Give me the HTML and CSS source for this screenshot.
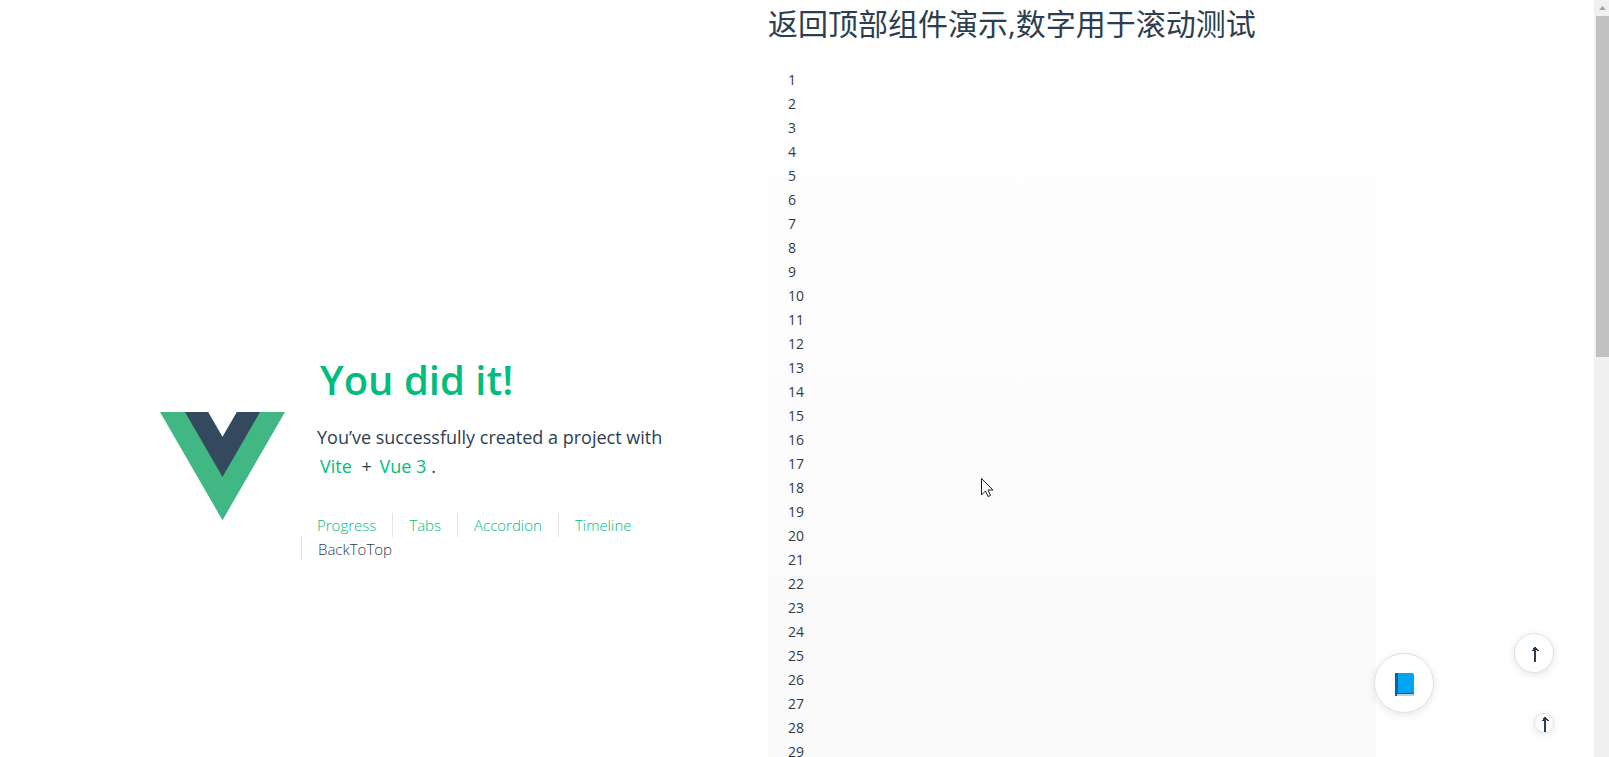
FILE: index.html
```html
<!DOCTYPE html>
<html lang="zh-CN">
<head>
<meta charset="utf-8">
<title>BackToTop</title>
<link rel="stylesheet" href="styles.css">
</head>
<body>
<div class="window">
  <div class="page">
    <header class="intro">
      <svg class="logo" viewBox="0 0 261.76 226.69" role="img" aria-label="Vue logo">
        <path fill="#41b883" d="M161.096.001l-30.225 52.351L100.647.001H-.005l130.877 226.688L261.749.001z"/>
        <path fill="#34495e" d="M161.096.001l-30.225 52.351L100.647.001H52.346l78.526 136.01L209.398.001z"/>
      </svg>
      <div class="wrapper">
        <div class="greetings">
          <h1 class="greeting-title">You did it!</h1>
          <h3 class="greeting-text">You’ve successfully created a project with<br><a class="link" href="#vite">Vite</a> + <a class="link" href="#vue">Vue 3</a>.</h3>
        </div>
        <nav class="nav">
          <a class="nav-link" href="#progress">Progress</a>
          <a class="nav-link" href="#tabs">Tabs</a>
          <a class="nav-link" href="#accordion">Accordion</a>
          <a class="nav-link" href="#timeline">Timeline</a>
          <a class="nav-link nav-current" href="#backtotop">BackToTop</a>
        </nav>
      </div>
    </header>
    <main class="demo">
      <h2 class="demo-title">返回顶部组件演示,数字用于滚动测试</h2>
      <ul class="numbers">
        <li>1</li><li>2</li><li>3</li><li>4</li><li>5</li><li>6</li><li>7</li><li>8</li><li>9</li><li>10</li>
        <li>11</li><li>12</li><li>13</li><li>14</li><li>15</li><li>16</li><li>17</li><li>18</li><li>19</li><li>20</li>
        <li>21</li><li>22</li><li>23</li><li>24</li><li>25</li><li>26</li><li>27</li><li>28</li><li>29</li>
      </ul>
    </main>
  </div>
  <div class="scrollbar" aria-hidden="true">
    <svg class="scroll-arrow" viewBox="0 0 13 16"><path fill="#a3a3a3" d="M3 10h7L6.500 6z"/></svg>
    <div class="scroll-thumb"></div>
  </div>
</div>
<button class="top-button top-book" type="button" aria-label="Back to top, book">
  <svg class="book" viewBox="0 0 19 23"><path fill="#0063b1" d="M0 0h3v23H0z"/><path fill="#cccccc" d="M2 21h17v2H2z"/><path fill="#0063b1" d="M0 20h19v1H2v2H0z"/><path fill="#00a4ef" d="M3 0h15v1h1v19H3z"/></svg>
</button>
<button class="top-button top-medium" type="button" aria-label="Back to top">
  <svg class="arrow" viewBox="0 0 7 15"><path fill="#2c3e50" d="M2 0h2v1h1v1h1v1h1v1H5V3H4v12H2V3v1H0V3h1V1h1z"/></svg>
</button>
<button class="top-button top-small" type="button" aria-label="Back to top, small">
  <svg class="arrow" viewBox="0 0 7 15"><path fill="#2c3e50" d="M2 0h2v1h1v1h1v1h1v1H5V3H4v12H2V3v1H0V3h1V1h1z"/></svg>
</button>
<svg class="cursor" viewBox="0 0 13 20" aria-hidden="true"><path fill="#fff" stroke="#1a1a2a" d="M.5.500v16.500l4-4 2.500 5.500 2.500-1-2.500-5.500h5z"/></svg>
</body>
</html>
```

FILE: styles.css
```css
* {
  box-sizing: border-box;
  margin: 0;
  padding: 0;
}

body {
  height: 100vh;
  overflow: hidden;
  background: #fff;
  color: #2c3e50;
  font: 15px/24px "Open Sans", "Noto Sans CJK SC", sans-serif;
}

a {
  color: #00bd7e;
  text-decoration: none;
}

.window {
  display: flex;
  height: 100%;
  overflow: hidden;
}

.page {
  flex: 1;
  display: grid;
  grid-template-columns: 1fr 1fr;
  padding: 0 218px 0 160px;
}

.intro {
  display: flex;
  align-items: center;
  gap: 32px;
  height: 100vh;
  padding-top: 176px;
  padding-right: 64px;
}

.logo {
  flex: none;
  width: 125px;
}

.wrapper {
  flex: 1;
  padding-bottom: 24px;
}

.greeting-title {
  padding-left: 3px;
  font-size: 40px;
  font-weight: 600;
  line-height: 62px;
  color: #00bd7e;
}

.greeting-text {
  padding-top: 12px;
  font-size: 18px;
  font-weight: 400;
  line-height: 29px;
  white-space: nowrap;
}

.link {
  padding: 3px 5px 3px 3px;
}

.nav {
  display: flex;
  flex-wrap: wrap;
  margin: 32px 0 0 -16px;
  font-weight: 300;
}

.nav-link {
  padding: 0 16px;
  border-left: 1px solid #e4e4e4;
}

.nav-link:first-child {
  border-left: 0;
}

.nav-current {
  color: #2c3e50;
}

.demo-title {
  font-size: 30px;
  font-weight: 400;
  line-height: 48px;
}

.numbers {
  padding: 20px;
  list-style: none;
  font-size: 14px;
  background: linear-gradient(#fff, #f9f9f9);
}

.scrollbar {
  width: 15px;
  padding-left: 2px;
  background: #f0f0f0;
}

.scroll-arrow {
  display: block;
  width: 13px;
  height: 16px;
}

.scroll-thumb {
  height: 45vh;
  background: #c1c1c1;
}

.top-button {
  position: fixed;
  display: flex;
  align-items: center;
  justify-content: center;
  width: 40px;
  height: 40px;
  padding: 3px 0 0 3px;
  background: #fff;
  border: 1px solid #e0e0e0;
  border-radius: 50%;
  box-shadow: 0 2px 8px rgba(0, 0, 0, 0.1);
}

.top-book {
  right: 175px;
  bottom: 44px;
  width: 60px;
  height: 60px;
  padding-left: 0;
}

.top-medium {
  right: 55px;
  bottom: 84px;
}

.top-small {
  right: 55px;
  bottom: 24px;
  width: 20px;
  height: 20px;
}

.book {
  width: 19px;
  height: 23px;
}

.arrow {
  width: 7px;
  height: 15px;
}

.cursor {
  position: fixed;
  left: 981px;
  top: 478px;
  width: 13px;
  height: 20px;
}
```
